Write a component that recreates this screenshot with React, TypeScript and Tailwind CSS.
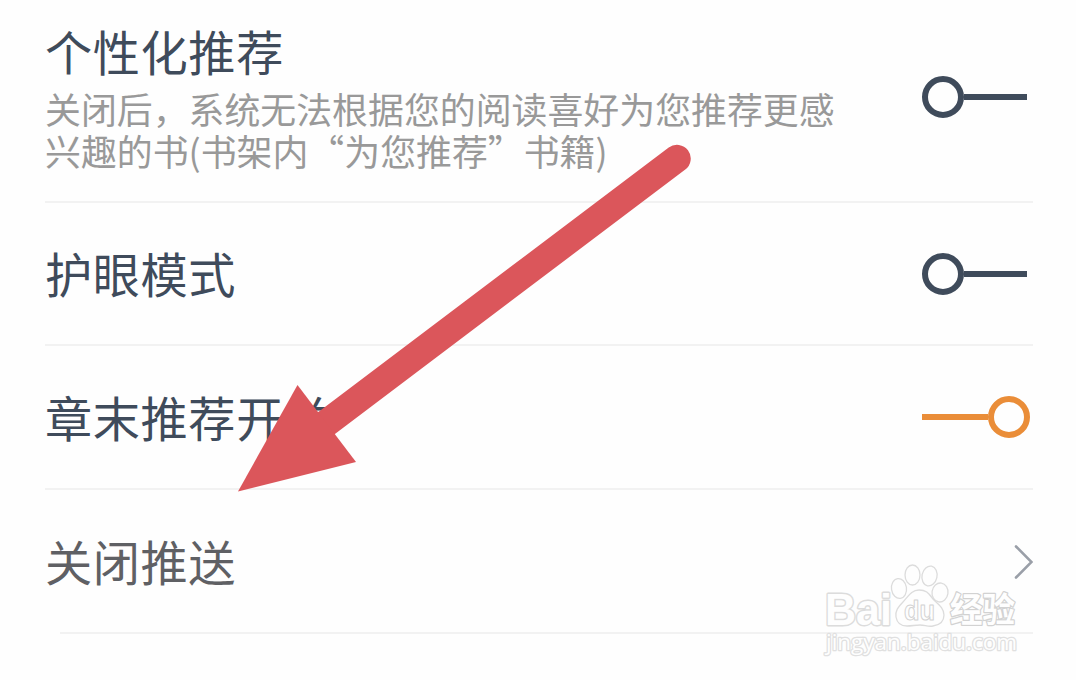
import { useState } from 'react';
import clsx from 'clsx';

const Toggle = ({ label, initial = false }: { label: string; initial?: boolean }) => {
  const [on, setOn] = useState(initial);

  return (
    <button
      type="button"
      role="switch"
      aria-checked={on}
      aria-label={label}
      onClick={() => setOn(!on)}
      className={clsx(
        'flex w-[108px] shrink-0 items-center',
        on ? 'flex-row-reverse text-[#ea8d38]' : 'pr-[3px] text-[#3f4b5b]'
      )}
    >
      <span className="h-[42px] w-[42px] shrink-0 rounded-full border-6 border-current" />
      <span className="h-[6px] flex-1 bg-current" />
    </button>
  );
};

const Arrow = () => (
  <svg
    className="pointer-events-none absolute top-0 left-0 text-[#db565b]"
    width="1076"
    height="680"
    fill="currentColor"
  >
    <path d="M322 426.500L677 158.500" stroke="currentColor" strokeWidth="27.500" strokeLinecap="round" />
    <path d="M238 491.500L297.500 385L356 462Z" />
  </svg>
);

const Watermark = () => (
  <svg
    className="pointer-events-none absolute top-[560px] left-[820px]"
    width="204"
    height="104"
    fill="#fefefe"
    stroke="#dcdcdc"
    strokeWidth="1.300"
    strokeLinejoin="round"
  >
    <text
      x="5"
      y="65"
      fontSize="45"
      textLength="67"
      lengthAdjust="spacingAndGlyphs"
      className="font-['Liberation_Sans',sans-serif] font-bold"
      strokeWidth="3"
      paintOrder="stroke"
    >
      Bai
    </text>
    <ellipse cx="79" cy="28.500" rx="7.500" ry="10" transform="rotate(-8 79 28.500)" />
    <ellipse cx="92.500" cy="15" rx="7.500" ry="10" />
    <ellipse cx="109.500" cy="16" rx="7.500" ry="10" transform="rotate(12 109.500 16)" />
    <ellipse cx="120" cy="32.500" rx="8" ry="9.500" transform="rotate(8 120 32.500)" />
    <path d="M99 30C91 30 88 37 83 42C78 47 75 51 76 57C77 63 81 66 87 66C92 66 95 65 100 65C105 65 108 67 113 66C120 65 124 61 124 55C124 48 118 44 113 39C109 34 107 30 99 30Z" />
    <text
      x="84"
      y="60"
      fontSize="27"
      textLength="31"
      lengthAdjust="spacingAndGlyphs"
      className="font-['Liberation_Sans',sans-serif] font-bold"
      stroke="#d2d2d2"
      strokeWidth="1"
    >
      du
    </text>
    <text
      x="130"
      y="62"
      fontSize="34"
      textLength="65"
      lengthAdjust="spacingAndGlyphs"
      className="font-['Noto_Sans_CJK_SC',sans-serif] font-bold"
      stroke="#d2d2d2"
      strokeWidth="2.500"
      paintOrder="stroke"
    >
      经验
    </text>
    <text
      x="6"
      y="90"
      fontSize="22"
      textLength="191"
      lengthAdjust="spacingAndGlyphs"
      className="font-['Open_Sans',sans-serif]"
      stroke="#e0e0e0"
      strokeWidth="2.500"
      paintOrder="stroke"
    >
      jingyan.baidu.com
    </text>
  </svg>
);

const App = () => {
  return (
    <div
      lang="zh-CN"
      className="relative h-[680px] w-[1076px] overflow-hidden bg-[#fefefe] pr-[43px] pl-[45px] font-['Noto_Sans_CJK_SC',sans-serif] text-[47.2px] leading-[56px] text-[#3f4b5b]"
    >
      <div className="flex h-[203px] items-start justify-between border-b-2 border-[#f2f2f2] pt-[23px]">
        <div>
          <h2 className="tracking-[0.6px]">个性化推荐</h2>
          <p className="mt-[8px] text-[35.9px] leading-[42px] whitespace-nowrap text-[#999]">
            关闭后，系统无法根据您的阅读喜好为您推荐更感
            <br />
            兴趣的书(书架内“为您推荐”书籍)
          </p>
        </div>
        <div className="mt-[53px] pr-[3px]">
          <Toggle label="个性化推荐" />
        </div>
      </div>

      <div className="flex h-[143px] items-center justify-between border-b-2 border-[#f2f2f2] pr-[3px]">
        <h2 className="pb-px tracking-[0.6px]">护眼模式</h2>
        <Toggle label="护眼模式" />
      </div>

      <div className="flex h-[144px] items-center justify-between border-b-2 border-[#f2f2f2] pr-[3px]">
        <h2 className="pb-px tracking-[0.6px]">章末推荐开关</h2>
        <Toggle label="章末推荐开关" initial />
      </div>

      <div className="flex h-[142px] items-center justify-between text-[#5f6064]">
        <h2 className="pb-px tracking-[0.6px]">关闭推送</h2>
        <svg className="mt-[2px]" width="20" height="36" fill="none" stroke="#9a9fa8" strokeWidth="2.600" strokeLinecap="round">
          <path d="M3 2.500L18.500 18L3 33.500" />
        </svg>
      </div>
      <div className="ml-[15px] h-[2px] bg-[#f2f2f2]" />

      <Watermark />
      <Arrow />
    </div>
  );
};

export default App;
